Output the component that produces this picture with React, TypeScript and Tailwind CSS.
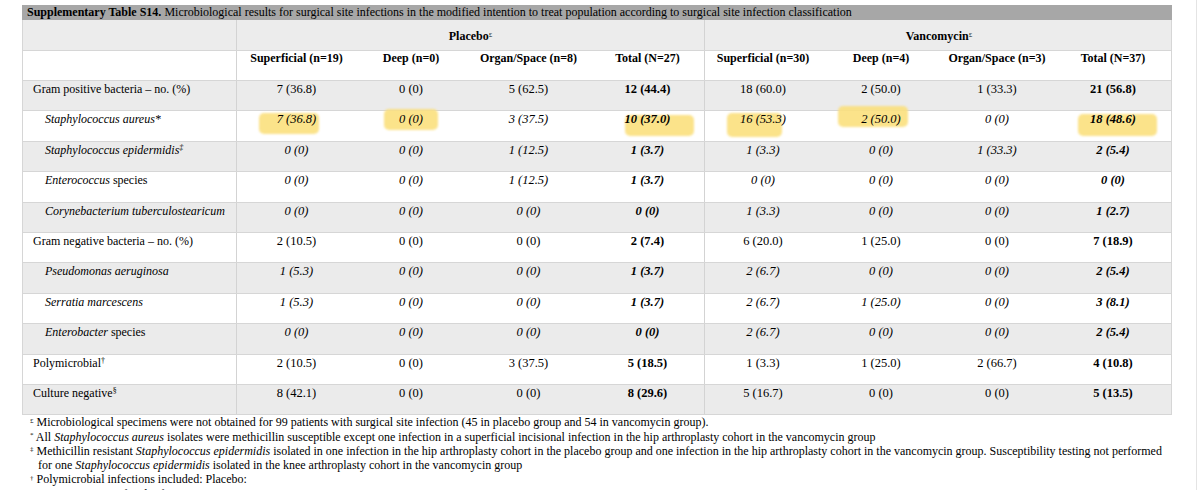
import React from "react";

type Row = {
  label: React.ReactNode;
  sub?: boolean;
  values: string[];
};

const GRID =
  "grid grid-cols-[213px_120px_110px_125px_113px_117px_120px_112px_120px]";

const rows: Row[] = [
  {
    label: "Gram positive bacteria – no. (%)",
    values: ["7 (36.8)", "0 (0)", "5 (62.5)", "12 (44.4)", "18 (60.0)", "2 (50.0)", "1 (33.3)", "21 (56.8)"],
  },
  {
    label: "Staphylococcus aureus*",
    sub: true,
    values: ["7 (36.8)", "0 (0)", "3 (37.5)", "10 (37.0)", "16 (53.3)", "2 (50.0)", "0 (0)", "18 (48.6)"],
  },
  {
    label: (
      <>
        Staphylococcus epidermidis<sup className="text-[8px]">‡</sup>
      </>
    ),
    sub: true,
    values: ["0 (0)", "0 (0)", "1 (12.5)", "1 (3.7)", "1 (3.3)", "0 (0)", "1 (33.3)", "2 (5.4)"],
  },
  {
    label: (
      <>
        Enterococcus <span className="not-italic">species</span>
      </>
    ),
    sub: true,
    values: ["0 (0)", "0 (0)", "1 (12.5)", "1 (3.7)", "0 (0)", "0 (0)", "0 (0)", "0 (0)"],
  },
  {
    label: "Corynebacterium tuberculostearicum",
    sub: true,
    values: ["0 (0)", "0 (0)", "0 (0)", "0 (0)", "1 (3.3)", "0 (0)", "0 (0)", "1 (2.7)"],
  },
  {
    label: "Gram negative bacteria – no. (%)",
    values: ["2 (10.5)", "0 (0)", "0 (0)", "2 (7.4)", "6 (20.0)", "1 (25.0)", "0 (0)", "7 (18.9)"],
  },
  {
    label: "Pseudomonas aeruginosa",
    sub: true,
    values: ["1 (5.3)", "0 (0)", "0 (0)", "1 (3.7)", "2 (6.7)", "0 (0)", "0 (0)", "2 (5.4)"],
  },
  {
    label: "Serratia marcescens",
    sub: true,
    values: ["1 (5.3)", "0 (0)", "0 (0)", "1 (3.7)", "2 (6.7)", "1 (25.0)", "0 (0)", "3 (8.1)"],
  },
  {
    label: (
      <>
        Enterobacter <span className="not-italic">species</span>
      </>
    ),
    sub: true,
    values: ["0 (0)", "0 (0)", "0 (0)", "0 (0)", "2 (6.7)", "0 (0)", "0 (0)", "2 (5.4)"],
  },
  {
    label: (
      <>
        Polymicrobial<sup className="text-[8px]">†</sup>
      </>
    ),
    values: ["2 (10.5)", "0 (0)", "3 (37.5)", "5 (18.5)", "1 (3.3)", "1 (25.0)", "2 (66.7)", "4 (10.8)"],
  },
  {
    label: (
      <>
        Culture negative<sup className="text-[8px]">§</sup>
      </>
    ),
    values: ["8 (42.1)", "0 (0)", "0 (0)", "8 (29.6)", "5 (16.7)", "0 (0)", "0 (0)", "5 (13.5)"],
  },
];

// highlighter marks on the S. aureus row, keyed by column
const marks: Record<number, string> = {
  0: "left-[22px] top-[2px] w-[60px] h-[21px]",
  1: "left-[28px] top-[-2px] w-[54px] h-[21px]",
  3: "left-[34px] top-[4px] w-[69px] h-[21px]",
  4: "left-[22px] top-[2px] w-[55px] h-[24px]",
  5: "left-[17px] top-[-5px] w-[70px] h-[21px]",
  7: "left-[25px] top-[3px] w-[79px] h-[22px]",
};

const headers = [
  "Superficial (n=19)",
  "Deep (n=0)",
  "Organ/Space (n=8)",
  "Total (N=27)",
  "Superficial (n=30)",
  "Deep (n=4)",
  "Organ/Space (n=3)",
  "Total (N=37)",
];

function sepLine(i: number) {
  return i === 0 || i === 4 ? "border-l border-[#d3d3d3]" : "";
}

export default function App() {
  return (
    <div className="min-h-screen w-[1197px] border-r border-[#e4e4e4] bg-white pt-[5px] font-['Liberation_Serif',serif] text-black">
      <div className="ml-[22px] w-[1150px]">
        <div className="h-[15px] bg-[#a7a7a7] pl-[5px] text-[12px] leading-[15px] whitespace-nowrap">
          <b>Supplementary Table S14.</b> Microbiological results for surgical site infections in the
          modified intention to treat population according to surgical site infection classification
        </div>

        <div className="border-x border-b border-[#d6d6d6]">
          {/* group heads */}
          <div className="grid h-[30px] grid-cols-[213px_468px_469px] bg-[#ececec] text-[12px] font-bold leading-[15px]">
            <div />
            <div className="border-l border-[#d3d3d3] pt-[9px] text-center">
              Placebo<sup className="text-[7px] font-normal">£</sup>
            </div>
            <div className="border-l border-[#d3d3d3] pt-[9px] text-center">
              Vancomycin<sup className="text-[7px] font-normal">£</sup>
            </div>
          </div>

          <div className={`${GRID} h-[30px] border-t border-[#d6d6d6] text-[12px] font-bold leading-[15px]`}>
            <div />
            {headers.map((h, i) => (
              <div key={i} className={`text-center ${sepLine(i)}`}>
                {h}
              </div>
            ))}
          </div>

          {rows.map((r, ri) => (
            <div
              key={ri}
              className={`${GRID} h-[30.4px] border-t border-[#d6d6d6] leading-[15px] ${
                ri % 2 === 0 ? "bg-[#ebebeb]" : "bg-white"
              } ${r.sub ? "italic" : ""}`}
            >
              <div
                className={`pt-[1px] text-[12px] whitespace-nowrap ${r.sub ? "pl-[22px]" : "pl-[10px]"}`}
              >
                {r.label}
              </div>
              {r.values.map((v, i) => (
                <div
                  key={i}
                  className={`relative pt-[1px] text-center text-[12.5px] ${sepLine(i)} ${
                    i === 3 || i === 7 ? "font-bold" : ""
                  }`}
                >
                  {ri === 1 && marks[i] !== undefined && (
                    <span
                      className={`absolute rounded-[5px] bg-[#fbe07e] opacity-90 blur-[1px] ${marks[i]}`}
                    />
                  )}
                  <span className="relative">{v}</span>
                </div>
              ))}
            </div>
          ))}
        </div>

        <div className="pl-[8px] text-[12px] leading-[14.3px] whitespace-nowrap">
          <div>
            <sup className="text-[7px]">£</sup> Microbiological specimens were not obtained for 99 patients
            with surgical site infection (45 in placebo group and 54 in vancomycin group).
          </div>
          <div>
            <sup className="text-[7px]">*</sup> All <i>Staphylococcus aureus</i> isolates were methicillin
            susceptible except one infection in a superficial incisional infection in the hip arthroplasty
            cohort in the vancomycin group
          </div>
          <div>
            <sup className="text-[7px]">‡</sup> Methicillin resistant <i>Staphylococcus epidermidis</i>{" "}
            isolated in one infection in the hip arthroplasty cohort in the placebo group and one infection
            in the hip arthroplasty cohort in the vancomycin group. Susceptibility testing not performed
          </div>
          <div className="pl-[8px]">
            for one <i>Staphylococcus epidermidis</i> isolated in the knee arthroplasty cohort in the
            vancomycin group
          </div>
          <div>
            <sup className="text-[7px]">†</sup> Polymicrobial infections included: Placebo:
          </div>
          <div className="pl-[65px]">Superficial infections</div>
        </div>
      </div>
    </div>
  );
}
